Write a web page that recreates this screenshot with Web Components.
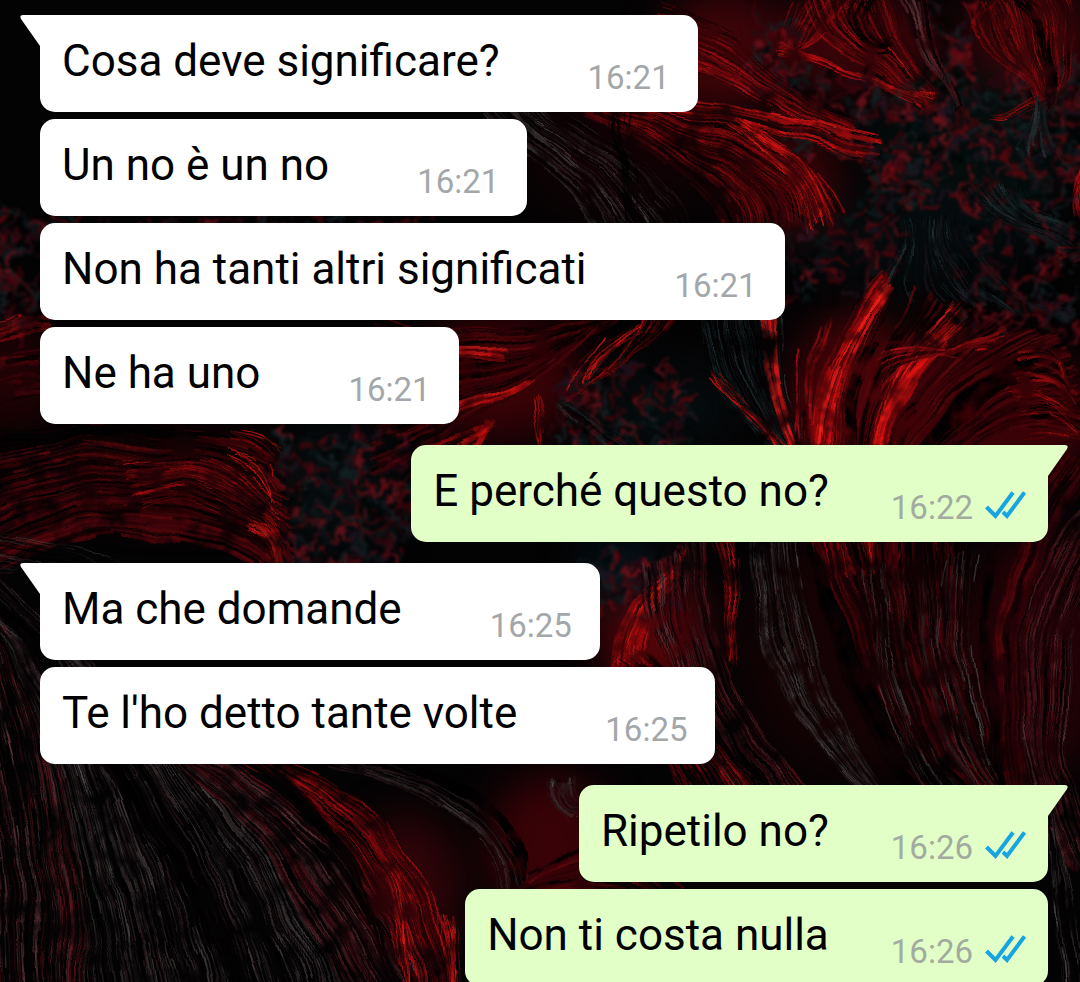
<!DOCTYPE html>
<html lang="it">
<head>
<meta charset="utf-8">
<meta name="viewport" content="width=device-width, initial-scale=1">
<title>Chat</title>
<style>
    html, body {
        margin: 0;
        height: 100%;
    }
    body {
        background: #050304;
        font-family: Roboto, "Liberation Sans", sans-serif;
        overflow: hidden;
    }
</style>
</head>
<body>
<chat-screen>
    <chat-bubble time="16:21" tail>Cosa deve significare?</chat-bubble>
    <chat-bubble time="16:21">Un no è un no</chat-bubble>
    <chat-bubble time="16:21">Non ha tanti altri significati</chat-bubble>
    <chat-bubble time="16:21">Ne ha uno</chat-bubble>
    <chat-bubble time="16:22" out tail>E perché questo no?</chat-bubble>
    <chat-bubble time="16:25" tail>Ma che domande</chat-bubble>
    <chat-bubble time="16:25">Te l'ho detto tante volte</chat-bubble>
    <chat-bubble time="16:26" out tail>Ripetilo no?</chat-bubble>
    <chat-bubble time="16:26" out>Non ti costa nulla</chat-bubble>
</chat-screen>

<template id="screen-tmpl">
    <style>
        :host {
            display: block;
            position: relative;
            min-height: 100%;
        }
        chat-wallpaper {
            position: absolute;
            inset: 0;
        }
        .messages {
            position: relative;
            display: flex;
            flex-direction: column;
            gap: 7px;
            padding: 15px 32px 15px 40px;
        }
    </style>
    <chat-wallpaper></chat-wallpaper>
    <main class="messages"><slot></slot></main>
</template>

<template id="bubble-tmpl">
    <style>
        :host {
            --bubble: #ffffff;
            display: flex;
            position: relative;
            align-self: flex-start;
            gap: 88px;
            padding: 0 28px 0 22px;
            border-radius: 15px;
            background: var(--bubble);
            color: #000;
        }
        :host([out]) {
            --bubble: #e1ffc7;
            align-self: flex-end;
            gap: 62px;
            padding-right: 22px;
        }
        :host([tail]) {
            border-top-left-radius: 0;
        }
        :host([out][tail]) {
            border-radius: 15px 0 15px 15px;
        }
        :host([tail]:not(:first-child)),
        :host([out][tail]) {
            margin-top: 14px;
        }
        .text {
            padding: 20px 0 25px;
            font-size: 44px;
            line-height: 52px;
        }
        .meta {
            display: flex;
            align-items: center;
            align-self: flex-end;
            gap: 12px;
            padding-bottom: 14px;
            font-size: 33px;
            line-height: 40px;
            color: #a3a7aa;
        }
        :host([out]) .meta {
            color: #a2ab9f;
        }
        .ticks, .tail {
            display: none;
        }
        :host([out]) .ticks {
            display: block;
            width: 41px;
            height: 34px;
        }
        :host([tail]) .tail {
            display: block;
            position: absolute;
            top: 0;
            right: 100%;
            width: 20px;
            height: 31px;
            fill: var(--bubble);
        }
        :host([out][tail]) .tail {
            right: auto;
            left: 100%;
            transform: scaleX(-1);
        }
    </style>
    <svg class="tail" viewBox="0 0 20 31" aria-hidden="true"><path d="M20 0H3Q-1 0 1 4L20 31Z"/></svg>
    <span class="text"><slot></slot></span>
    <span class="meta">
        <time></time>
        <svg class="ticks" viewBox="0 0 41 34" fill="none" stroke="#17a5e2" stroke-width="4" aria-hidden="true">
            <path d="M1.500 16L10.500 25L28 1.500M18 21L22 25L39.500 1.500"/>
        </svg>
    </span>
</template>

<script>
    // Small seeded generator, so the strands fall the same way on every load
    function seeded(seed) {
        return function() {
            seed = (seed * 1664525 + 1013904223) >>> 0;
            return seed / 4294967296;
        };
    }

    const palettes = {
        bright: ['#f01414', '#d01010', '#b00c0e', '#8a080a', '#400406', '#e8201a'],
        red: ['#a00c10', '#800a0e', '#60080c', '#3c0406', '#180204', '#b41014', '#0a0203'],
        dark: ['#4c060c', '#38040a', '#240306', '#100103', '#5a080c', '#000000'],
        wine: ['#481418', '#300a10', '#58363a', '#14060a', '#000000', '#5c1018', '#000000'],
        grey: ['#3c3838', '#281e20', '#504a4a', '#0c0808', '#000000', '#30161a', '#000000'],
        teal: ['#0c1c1e', '#182426', '#283436', '#040c0c', '#000404', '#20181e'],
        black: ['#000000', '#020202', '#060204']
    };

    // Soft areas of colour: cx, cy, rx, ry, fill
    const glows = [
        [720, 50, 60, 60, '#3c0408'], [850, 40, 80, 50, '#380408'], [1020, 40, 60, 60, '#3a0508'],
        [780, 180, 50, 50, '#400408'], [620, 150, 90, 60, '#100204'], [960, 150, 100, 80, '#040c0c'],
        [900, 240, 120, 40, '#060a0c'], [980, 410, 110, 70, '#380206'], [850, 390, 60, 80, '#480408'],
        [500, 370, 80, 60, '#380206'], [660, 400, 70, 40, '#060c0e'], [190, 470, 120, 30, '#280206'],
        [340, 480, 60, 70, '#060c0e'], [550, 830, 60, 70, '#380206'], [650, 620, 50, 60, '#500408'],
        [850, 640, 110, 120, '#140204'], [1030, 640, 70, 120, '#220206'], [410, 870, 50, 70, '#300408'],
        [20, 370, 50, 50, '#200204'], [620, 560, 40, 30, '#04141a']
    ];

    // Bundles of strands between two guide curves: from, to, count, palette, width
    const bundles = [
        [[660, 5, 720, 10, 770, 90, 850, 122], [650, 50, 710, 70, 780, 120, 840, 136], 80, 'red', 1],
        [[640, 90, 720, 100, 790, 115, 868, 138], [640, 105, 760, 120, 820, 150, 868, 160], 26, 'bright', 2],
        [[620, 105, 720, 120, 810, 140, 838, 205], [580, 110, 660, 150, 720, 190, 716, 230], 110, 'dark', 2],
        [[620, 105, 720, 120, 810, 140, 838, 205], [600, 110, 680, 150, 750, 190, 740, 230], 90, 'red', 1],
        [[740, 120, 780, 140, 820, 165, 834, 215], [720, 125, 760, 150, 800, 190, 800, 226], 30, 'bright', 1],
        [[560, 110, 620, 140, 690, 180, 700, 240], [480, 110, 510, 150, 580, 190, 590, 240], 110, 'grey', 1],
        [[610, 105, 612, 140, 622, 190, 626, 240], [626, 105, 628, 140, 636, 190, 636, 240], 14, 'black', 2],
        [[790, 0, 765, 30, 770, 55, 800, 56], [860, 0, 830, 30, 810, 40, 788, 46], 50, 'red', 1],
        [[800, 0, 800, 50, 850, 45, 915, 102], [890, 0, 890, 40, 920, 60, 922, 90], 120, 'red', 1],
        [[840, 0, 810, 30, 860, 60, 880, 50], [870, 0, 850, 20, 860, 40, 880, 36], 16, 'black', 2],
        [[775, 52, 820, 60, 860, 70, 905, 102], [770, 44, 810, 60, 860, 80, 920, 92], 20, 'bright', 1],
        [[890, 0, 910, 40, 930, 80, 948, 102], [920, 0, 925, 40, 935, 70, 944, 98], 24, 'wine', 2],
        [[955, 0, 970, 50, 1000, 60, 1030, 100], [1060, 0, 1078, 40, 1060, 80, 1040, 104], 120, 'red', 1],
        [[956, 0, 960, 20, 965, 28, 975, 36], [990, 0, 965, 8, 962, 14, 960, 24], 12, 'bright', 1],
        [[1000, 0, 1030, 20, 1040, 60, 1036, 100], [1024, 0, 1044, 30, 1046, 60, 1040, 100], 16, 'black', 2],
        [[980, 110, 1000, 116, 1020, 98, 1040, 90], [985, 114, 1005, 120, 1020, 104, 1044, 100], 8, 'bright', 1],
        [[1032, 100, 1038, 120, 1044, 130, 1056, 148], [1028, 100, 1024, 130, 1010, 140, 1006, 148], 16, 'teal', 2],
        [[1080, 150, 1060, 160, 1070, 200, 1080, 215], [1080, 180, 1050, 190, 1060, 225, 1080, 240], 20, 'bright', 1],
        [[960, 190, 980, 220, 1030, 230, 1080, 260], [1010, 180, 1010, 200, 1050, 220, 1080, 230], 60, 'teal', 1],
        [[1040, 240, 1060, 240, 1070, 236, 1084, 230], [1054, 260, 1066, 256, 1070, 250, 1084, 256], 12, 'bright', 2],
        [[890, 220, 900, 260, 870, 270, 868, 290], [960, 210, 950, 250, 1000, 290, 1060, 310], 60, 'teal', 1],
        [[690, 320, 700, 380, 740, 430, 800, 470], [780, 290, 770, 350, 780, 400, 812, 470], 110, 'teal', 1],
        [[760, 315, 756, 370, 776, 420, 800, 470], [772, 310, 764, 360, 790, 420, 800, 470], 16, 'bright', 2],
        [[708, 368, 724, 400, 760, 420, 776, 450], [712, 368, 740, 390, 766, 420, 790, 450], 16, 'bright', 1],
        [[850, 560, 830, 430, 870, 350, 905, 284], [880, 560, 880, 430, 940, 370, 1054, 334], 120, 'dark', 2],
        [[830, 560, 790, 440, 800, 350, 878, 268], [850, 560, 826, 430, 850, 350, 884, 290], 80, 'red', 1],
        [[830, 560, 790, 440, 800, 350, 878, 268], [830, 560, 806, 430, 830, 350, 884, 284], 30, 'bright', 2],
        [[850, 560, 860, 400, 900, 330, 940, 298], [856, 560, 870, 400, 920, 330, 970, 308], 36, 'bright', 1],
        [[860, 560, 850, 430, 890, 380, 930, 342], [874, 560, 864, 430, 904, 380, 936, 338], 24, 'bright', 2],
        [[880, 390, 900, 360, 940, 340, 1008, 324], [870, 340, 900, 330, 940, 350, 970, 346], 22, 'red', 2],
        [[820, 560, 780, 430, 795, 380, 790, 352], [830, 560, 800, 430, 800, 380, 824, 308], 30, 'red', 2],
        [[850, 560, 830, 430, 830, 380, 856, 340], [860, 560, 840, 430, 846, 380, 870, 340], 26, 'black', 2],
        [[870, 560, 880, 420, 990, 360, 1056, 336], [890, 560, 930, 440, 1000, 400, 1074, 430], 140, 'dark', 2],
        [[900, 470, 920, 400, 980, 360, 1030, 346], [910, 470, 940, 410, 990, 380, 1020, 370], 26, 'black', 3],
        [[1000, 384, 1030, 376, 1050, 384, 1062, 400], [1018, 344, 1040, 334, 1054, 340, 1050, 364], 22, 'red', 2],
        [[1000, 384, 1020, 378, 1040, 386, 1056, 400], [1004, 390, 1020, 386, 1040, 394, 1056, 406], 14, 'bright', 1],
        [[1004, 400, 1030, 388, 1050, 400, 1066, 420], [1018, 430, 1040, 424, 1060, 426, 1080, 434], 20, 'red', 1],
        [[380, 310, 450, 330, 560, 330, 640, 290], [380, 470, 440, 420, 540, 390, 600, 310], 130, 'dark', 2],
        [[640, 300, 640, 340, 590, 380, 560, 400], [670, 310, 660, 330, 640, 340, 610, 360], 46, 'red', 1],
        [[600, 330, 590, 350, 570, 360, 558, 388], [640, 320, 610, 340, 600, 360, 590, 372], 14, 'bright', 1],
        [[430, 346, 460, 346, 480, 350, 502, 348], [430, 352, 460, 354, 480, 352, 500, 352], 8, 'bright', 2],
        [[440, 410, 470, 396, 500, 390, 528, 374], [440, 414, 480, 402, 510, 396, 528, 376], 12, 'bright', 2],
        [[430, 440, 470, 420, 490, 424, 500, 416], [460, 450, 476, 440, 480, 436, 486, 424], 18, 'bright', 2],
        [[534, 392, 532, 410, 536, 430, 540, 446], [538, 390, 544, 410, 546, 430, 546, 446], 10, 'bright', 1],
        [[550, 400, 560, 430, 600, 440, 620, 450], [560, 396, 600, 410, 640, 430, 650, 450], 20, 'teal', 1],
        [[0, 424, 100, 400, 230, 410, 284, 440], [0, 560, 100, 500, 230, 510, 300, 590], 220, 'dark', 2],
        [[120, 450, 180, 436, 240, 440, 276, 490], [150, 500, 190, 480, 240, 500, 290, 560], 50, 'red', 1],
        [[0, 440, 80, 430, 160, 420, 220, 424], [0, 424, 60, 424, 100, 420, 140, 420], 30, 'black', 3],
        [[240, 420, 260, 424, 276, 430, 284, 444], [234, 454, 250, 460, 270, 480, 274, 500], 24, 'bright', 1],
        [[262, 500, 276, 510, 286, 530, 292, 560], [250, 520, 270, 530, 280, 545, 286, 570], 20, 'bright', 1],
        [[0, 515, 60, 520, 120, 540, 160, 570], [0, 560, 40, 560, 60, 560, 80, 580], 34, 'grey', 1],
        [[0, 350, 10, 346, 30, 344, 50, 346], [0, 410, 10, 400, 30, 395, 50, 390], 24, 'dark', 3],
        [[0, 324, 10, 318, 30, 310, 50, 312], [0, 342, 10, 336, 30, 330, 50, 334], 16, 'red', 2],
        [[0, 560, 60, 640, 90, 780, 100, 990], [-60, 600, -30, 700, 0, 840, 0, 990], 160, 'wine', 1],
        [[0, 560, 100, 640, 190, 860, 220, 990], [-30, 580, 60, 660, 80, 840, 100, 990], 140, 'grey', 1],
        [[60, 620, 200, 720, 320, 860, 360, 990], [0, 600, 120, 700, 190, 860, 220, 990], 170, 'grey', 1],
        [[0, 560, 100, 660, 220, 860, 280, 990], [0, 600, 60, 660, 180, 860, 240, 990], 30, 'black', 3],
        [[200, 740, 320, 780, 400, 880, 440, 990], [120, 700, 240, 780, 330, 900, 350, 990], 150, 'wine', 1],
        [[280, 745, 390, 770, 450, 870, 466, 990], [240, 745, 350, 790, 390, 880, 415, 990], 140, 'red', 1],
        [[240, 745, 330, 790, 370, 880, 395, 990], [260, 745, 350, 790, 380, 880, 405, 990], 16, 'black', 2],
        [[380, 850, 400, 880, 406, 940, 408, 990], [386, 850, 410, 880, 414, 940, 414, 990], 10, 'bright', 1],
        [[440, 900, 446, 930, 450, 960, 450, 990], [456, 900, 460, 930, 462, 960, 458, 990], 18, 'bright', 1],
        [[400, 750, 470, 780, 530, 800, 520, 860], [420, 760, 480, 780, 530, 790, 512, 900], 34, 'black', 4],
        [[330, 750, 460, 780, 510, 840, 500, 900], [380, 750, 460, 770, 530, 820, 524, 880], 40, 'grey', 1],
        [[550, 764, 548, 790, 556, 800, 566, 802], [576, 764, 570, 780, 576, 784, 590, 790], 24, 'grey', 2],
        [[600, 690, 610, 640, 620, 600, 660, 570], [640, 700, 640, 620, 660, 590, 690, 530], 90, 'bright', 1],
        [[700, 520, 700, 600, 720, 720, 830, 800], [640, 560, 650, 640, 690, 740, 730, 800], 160, 'wine', 1],
        [[700, 520, 720, 560, 730, 600, 724, 640], [720, 520, 732, 560, 736, 600, 730, 650], 34, 'red', 1],
        [[740, 520, 750, 620, 760, 700, 880, 800], [790, 520, 800, 620, 830, 720, 900, 800], 150, 'grey', 1],
        [[640, 640, 680, 700, 740, 740, 760, 800], [600, 660, 640, 700, 670, 740, 690, 800], 100, 'red', 1],
        [[650, 640, 690, 700, 750, 740, 770, 800], [620, 660, 650, 700, 690, 740, 710, 800], 20, 'black', 2],
        [[800, 520, 820, 620, 860, 720, 940, 800], [960, 520, 950, 620, 960, 700, 1030, 800], 150, 'dark', 2],
        [[800, 520, 820, 620, 850, 720, 920, 800], [820, 560, 840, 640, 880, 720, 980, 800], 34, 'black', 4],
        [[860, 560, 856, 650, 890, 720, 930, 800], [970, 540, 950, 640, 970, 720, 1020, 800], 60, 'grey', 1],
        [[1090, 480, 980, 570, 990, 720, 1060, 850], [1130, 520, 1040, 600, 1040, 720, 1090, 850], 180, 'wine', 1],
        [[1050, 450, 980, 560, 970, 660, 1000, 790], [1100, 450, 1000, 570, 1000, 680, 1030, 800], 40, 'dark', 2],
        [[980, 540, 970, 600, 970, 700, 990, 800], [990, 540, 980, 600, 980, 700, 1010, 800], 16, 'black', 3],
        [[500, 900, 540, 870, 580, 870, 640, 890], [540, 850, 580, 820, 640, 830, 700, 880], 24, 'dark', 3],
        [[1040, 790, 1060, 850, 1070, 920, 1080, 990], [1040, 800, 1044, 850, 1046, 920, 1050, 990], 24, 'grey', 1]
    ];

    // Tangled areas between the bundles: x, y, width, height, count
    const tangles = [
        [740, 20, 60, 70, 60], [780, 70, 290, 90, 300], [860, 150, 220, 60, 170],
        [780, 215, 110, 80, 80], [950, 220, 120, 110, 140], [284, 424, 130, 140, 240],
        [560, 360, 130, 90, 130], [0, 212, 44, 110, 90], [590, 542, 80, 50, 70],
        [36, 216, 400, 8, 60], [920, 0, 40, 110, 50], [1050, 60, 30, 100, 50]
    ];

    class ChatWallpaper extends HTMLElement {
        constructor() {
            super();
            this._shadowRoot = this.attachShadow({ mode: 'open' });
            this._random = seeded(29);
            this._shadowRoot.innerHTML = `
                <style>
                    :host { display: block; overflow: hidden; background: #040304; }
                    svg { display: block; width: 100%; height: 100%; }
                </style>
                <svg viewBox="0 0 1080 982" preserveAspectRatio="xMidYMin slice" fill="none" stroke-linecap="round" aria-hidden="true">
                    <defs>
                        <filter id="glow" x="-50%" y="-50%" width="200%" height="200%" color-interpolation-filters="sRGB">
                            <feGaussianBlur stdDeviation="20"/>
                        </filter>
                        <filter id="tangle" filterUnits="userSpaceOnUse" x="0" y="0" width="1080" height="982" color-interpolation-filters="sRGB">
                            <feTurbulence type="fractalNoise" baseFrequency="0.06" numOctaves="3" seed="4" result="bend"/>
                            <feDisplacementMap in="SourceGraphic" in2="bend" scale="24" xChannelSelector="R" yChannelSelector="G"/>
                            <feGaussianBlur stdDeviation="1.4"/>
                        </filter>
                        <!-- bends the strands a little, then lets patches of them sink into the dark -->
                        <filter id="hair" filterUnits="userSpaceOnUse" x="0" y="0" width="1080" height="982" color-interpolation-filters="sRGB">
                            <feTurbulence type="fractalNoise" baseFrequency="0.014" numOctaves="2" seed="4" result="bend"/>
                            <feDisplacementMap in="SourceGraphic" in2="bend" scale="18" xChannelSelector="R" yChannelSelector="G"/>
                            <feGaussianBlur stdDeviation="0.7" result="lines"/>
                            <feTurbulence type="fractalNoise" baseFrequency="0.04" numOctaves="3" seed="9"/>
                            <feColorMatrix values="0 0 0 0 0  0 0 0 0 0  0 0 0 0 0  2.8 0 0 0 -0.6" result="patches"/>
                            <feComposite in="lines" in2="patches" operator="in"/>
                        </filter>
                    </defs>
                    <g filter="url(#glow)">${this._glows()}</g>
                    <g filter="url(#tangle)">${this._tangles()}</g>
                    <g filter="url(#hair)">${this._strands()}</g>
                </svg>
            `;
        }

        _pick(list) {
            return list[Math.floor(this._random() * list.length)];
        }

        _glows() {
            return glows.map(([cx, cy, rx, ry, fill]) =>
                `<ellipse cx="${cx}" cy="${cy}" rx="${rx}" ry="${ry}" fill="${fill}"/>`).join('');
        }

        _strands() {
            let out = '';
            for (const [from, to, count, palette, width] of bundles) {
                for (let i = 0; i < count; i++) {
                    const t = this._random();
                    const p = from.map((v, k) => (v + (to[k] - v) * t + (this._random() - 0.5) * 9).toFixed(1));
                    const w = (width * (0.6 + this._random())).toFixed(1);
                    const opacity = (0.35 + this._random() * 0.5).toFixed(2);
                    const dash = Math.round(30 + this._random() * 160);
                    out += `<path d="M${p[0]} ${p[1]}C${p.slice(2).join(' ')}" stroke="${this._pick(palettes[palette])}" stroke-opacity="${opacity}"`
                        + ` stroke-width="${w}" stroke-dasharray="${dash} ${Math.round(dash / 2)}" stroke-dashoffset="${Math.round(this._random() * 300)}"/>`;
                }
            }
            return out;
        }

        _tangles() {
            const colors = ['#5c080e', '#40060c', '#70101a', '#2a0810', '#142224', '#0a1618', '#000404', '#201420'];
            let out = '';
            for (const [x, y, w, h, count] of tangles) {
                for (let i = 0; i < count; i++) {
                    const px = (x + this._random() * w).toFixed(1);
                    const py = (y + this._random() * h).toFixed(1);
                    const d = () => ((this._random() - 0.5) * 30).toFixed(1);
                    out += `<path d="M${px} ${py}q${d()} ${d()} ${d()} ${d()}" stroke="${this._pick(colors)}" stroke-opacity="0.8" stroke-width="3"/>`;
                }
            }
            return out;
        }
    }

    class ChatBubble extends HTMLElement {
        constructor() {
            super();
            this._shadowRoot = this.attachShadow({ mode: 'open' });
            this._shadowRoot.appendChild(document.getElementById('bubble-tmpl').content.cloneNode(true));
            this._time = this._shadowRoot.querySelector('time');
        }

        static get observedAttributes() {
            return ['time'];
        }

        attributeChangedCallback(name, oldValue, value) {
            this._time.textContent = value;
        }
    }

    class ChatScreen extends HTMLElement {
        constructor() {
            super();
            this._shadowRoot = this.attachShadow({ mode: 'open' });
            this._shadowRoot.appendChild(document.getElementById('screen-tmpl').content.cloneNode(true));
        }
    }

    customElements.define('chat-wallpaper', ChatWallpaper);
    customElements.define('chat-bubble', ChatBubble);
    customElements.define('chat-screen', ChatScreen);
</script>
</body>
</html>
